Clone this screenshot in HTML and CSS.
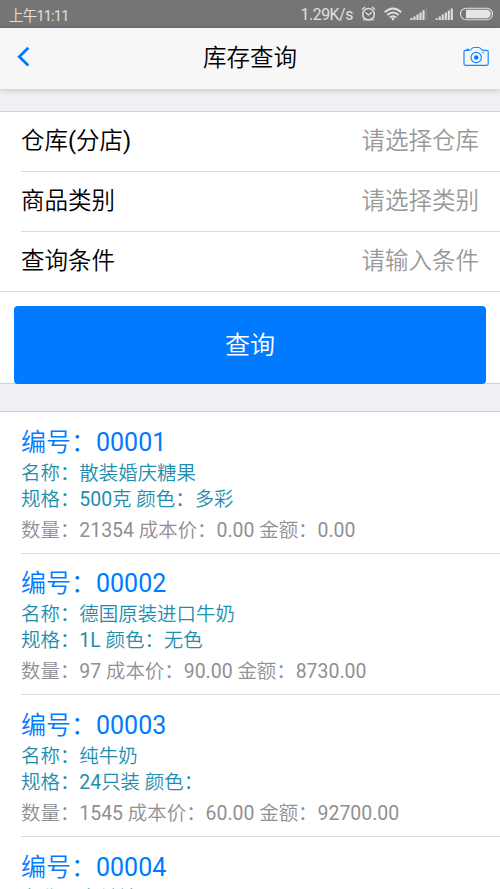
FILE: index.html
```html
<!DOCTYPE html>
<html lang="zh-CN">
<head>
<meta charset="utf-8">
<title>库存查询</title>
<link rel="stylesheet" href="styles.css">
</head>
<body>
<div class="status">
  <span class="time">上午11:11</span>
  <span class="speed">1.29K/s</span>
  <svg class="status-icons" viewBox="361 0 139 28" fill="none" stroke="#e0e0e0">
    <circle cx="368.5" cy="14.3" r="5.8" stroke-width="1.5"/>
    <path d="M365.500 12.500l3 2.500 3.200-2.500M362 9.500l3-2.600M375 9.500l-3-2.600M364.500 19l-1 1.500M372.500 19l1 1.500" stroke-width="1.300"/>
    <path d="M384.700 12.200q8.300-7.600 16.600 0M387.300 15q5.700-5 11.400 0M389.800 17.500q3.200-2.600 6.400 0" stroke-width="1.900"/>
    <circle cx="393" cy="19" r="1.300" fill="#e0e0e0" stroke="none"/>
    <path d="M411.500 18v2M414.500 16.500v3.500M417.500 14.500v5.500M420.500 12.500v7.500M423.500 10.300v9.700" stroke-width="2.100"/>
    <path d="M426.300 8v12" stroke="#888" stroke-width="1.500"/>
    <path d="M436.800 18.300v1.700M439.800 16.500v3.500M442.800 14.500v5.500M445.800 12.500v7.500M448.800 10.500v9.500M451.800 8.500v11.500" stroke-width="2.100"/>
    <rect x="460.500" y="8.300" width="32" height="11.400" rx="5.700" stroke-width="1.100"/>
    <path d="M466 9.800h20.500a4.200 4.200 0 0 1 0 8.400H466z" fill="#e6e6e6" stroke="none"/>
  </svg>
</div>
<header class="bar">
  <svg class="back" viewBox="0 0 14 22"><path d="M11.300 1.800L2.300 10.700l9 8.900" fill="none" stroke="#007aff" stroke-width="2.800"/></svg>
  <h1>库存查询</h1>
  <svg class="camera" viewBox="0 0 28 22" fill="none" stroke="#1687ff">
    <path d="M3.500 4.300h3.200Q8.700 4.200 9.500 3 10.500 1.500 12 1.500h4.500q1.500 0 2.500 1.500.8 1.300 2.500 1.300h3.200q1.500 0 1.500 1.500v12q0 1.500-1.500 1.500h-21.200q-1.500 0-1.500-1.500v-12q0-1.500 1.500-1.500z" stroke-width="1.200"/>
    <circle cx="14.200" cy="11.500" r="5.200" stroke-width="1.200"/><circle cx="14.200" cy="11.500" r="2.200" fill="#007aff" stroke="none"/>
    <path d="M4.500 3.500h2.500M20.500 6.500h1.300" stroke-width="1.300"/>
  </svg>
</header>
<main>
  <section class="form">
    <div class="field"><span>仓库(分店)</span><span class="hint">请选择仓库</span></div>
    <div class="field"><span>商品类别</span><span class="hint">请选择类别</span></div>
    <div class="field"><span>查询条件</span><span class="hint">请输入条件</span></div>
    <div class="action"><button class="query">查询</button></div>
  </section>
  <section class="list">
    <article class="item"><h2>编号：00001</h2><p>名称：散装婚庆糖果</p><p>规格：500克 颜色：多彩</p><p class="totals">数量：21354 成本价：0.00 金额：0.00</p></article>
    <article class="item"><h2>编号：00002</h2><p>名称：德国原装进口牛奶</p><p>规格：1L 颜色：无色</p><p class="totals">数量：97 成本价：90.00 金额：8730.00</p></article>
    <article class="item"><h2>编号：00003</h2><p>名称：纯牛奶</p><p>规格：24只装 颜色：</p><p class="totals">数量：1545 成本价：60.00 金额：92700.00</p></article>
    <article class="item"><h2>编号：00004</h2><p>名称：白兰地</p></article>
  </section>
</main>
</body>
</html>
```
FILE: styles.css
```css
* { box-sizing: border-box; margin: 0; padding: 0; }
body {
  height: 889px;
  display: flex;
  flex-direction: column;
  overflow: hidden;
  background: #efeff4;
  color: #000;
  font-family: Roboto, "Noto Sans CJK SC DemiLight", "Noto Sans CJK SC", sans-serif;
}
.status {
  height: 28px;
  flex: none;
  display: flex;
  align-items: center;
  padding-left: 9px;
  background: #757575;
  color: #e0e0e0;
  font-size: 14px;
}
.time { flex: 1; font-size: 14.5px; letter-spacing: -.8px; }
.speed { font-size: 15.8px; letter-spacing: -.4px; margin-right: 8px; }
.status-icons { width: 139px; height: 28px; }
.bar {
  position: relative;
  height: 61px;
  flex: none;
  display: flex;
  align-items: center;
  justify-content: space-between;
  padding: 0 10px 3px 17px;
  background: #f7f7f8;
  box-shadow: 0 1px 6px rgba(0, 0, 0, .2);
}
.back { width: 14px; height: 22px; margin-right: 7px; }
.bar h1 { font-size: 23.5px; font-weight: 400; padding-bottom: 3px; }
.camera { width: 28px; height: 22px; }
main { flex: 1; padding-top: 22px; overflow: hidden; }
.form {
  height: 273px;
  background: #fff;
  border-top: 1px solid #d2d2d6;
  border-bottom: 1px solid #d2d2d6;
}
.field {
  height: 60px;
  margin-left: 21px;
  padding: 0 21px 5px 0;
  display: flex;
  align-items: center;
  justify-content: space-between;
  border-bottom: 1px solid #d9d9dc;
  font-size: 23.5px;
}
.hint { color: #999; }
.field:nth-child(3) { margin-left: 0; padding-left: 21px; }
.action { padding: 14px 14px 0; }
.query {
  display: block;
  width: 100%;
  height: 78px;
  padding-bottom: 5px;
  border: 0;
  border-radius: 4px;
  background: #007aff;
  color: #fff;
  font: inherit;
  font-size: 25px;
}
.list {
  margin-top: 27px;
  background: #fff;
  border-top: 1px solid #d2d2d6;
}
.item {
  height: 141.7px;
  margin-left: 21px;
  padding-top: 11.5px;
  border-bottom: 1px solid #d9d9dc;
  color: #1e8eae;
  font-size: 19.45px;
  white-space: nowrap;
}
.item h2 {
  font-size: 25px;
  font-weight: 400;
  line-height: 37px;
  color: #007aff;
}
.item p { line-height: 26px; }
.item .totals { line-height: 35px; color: #8f8f94; }
```
